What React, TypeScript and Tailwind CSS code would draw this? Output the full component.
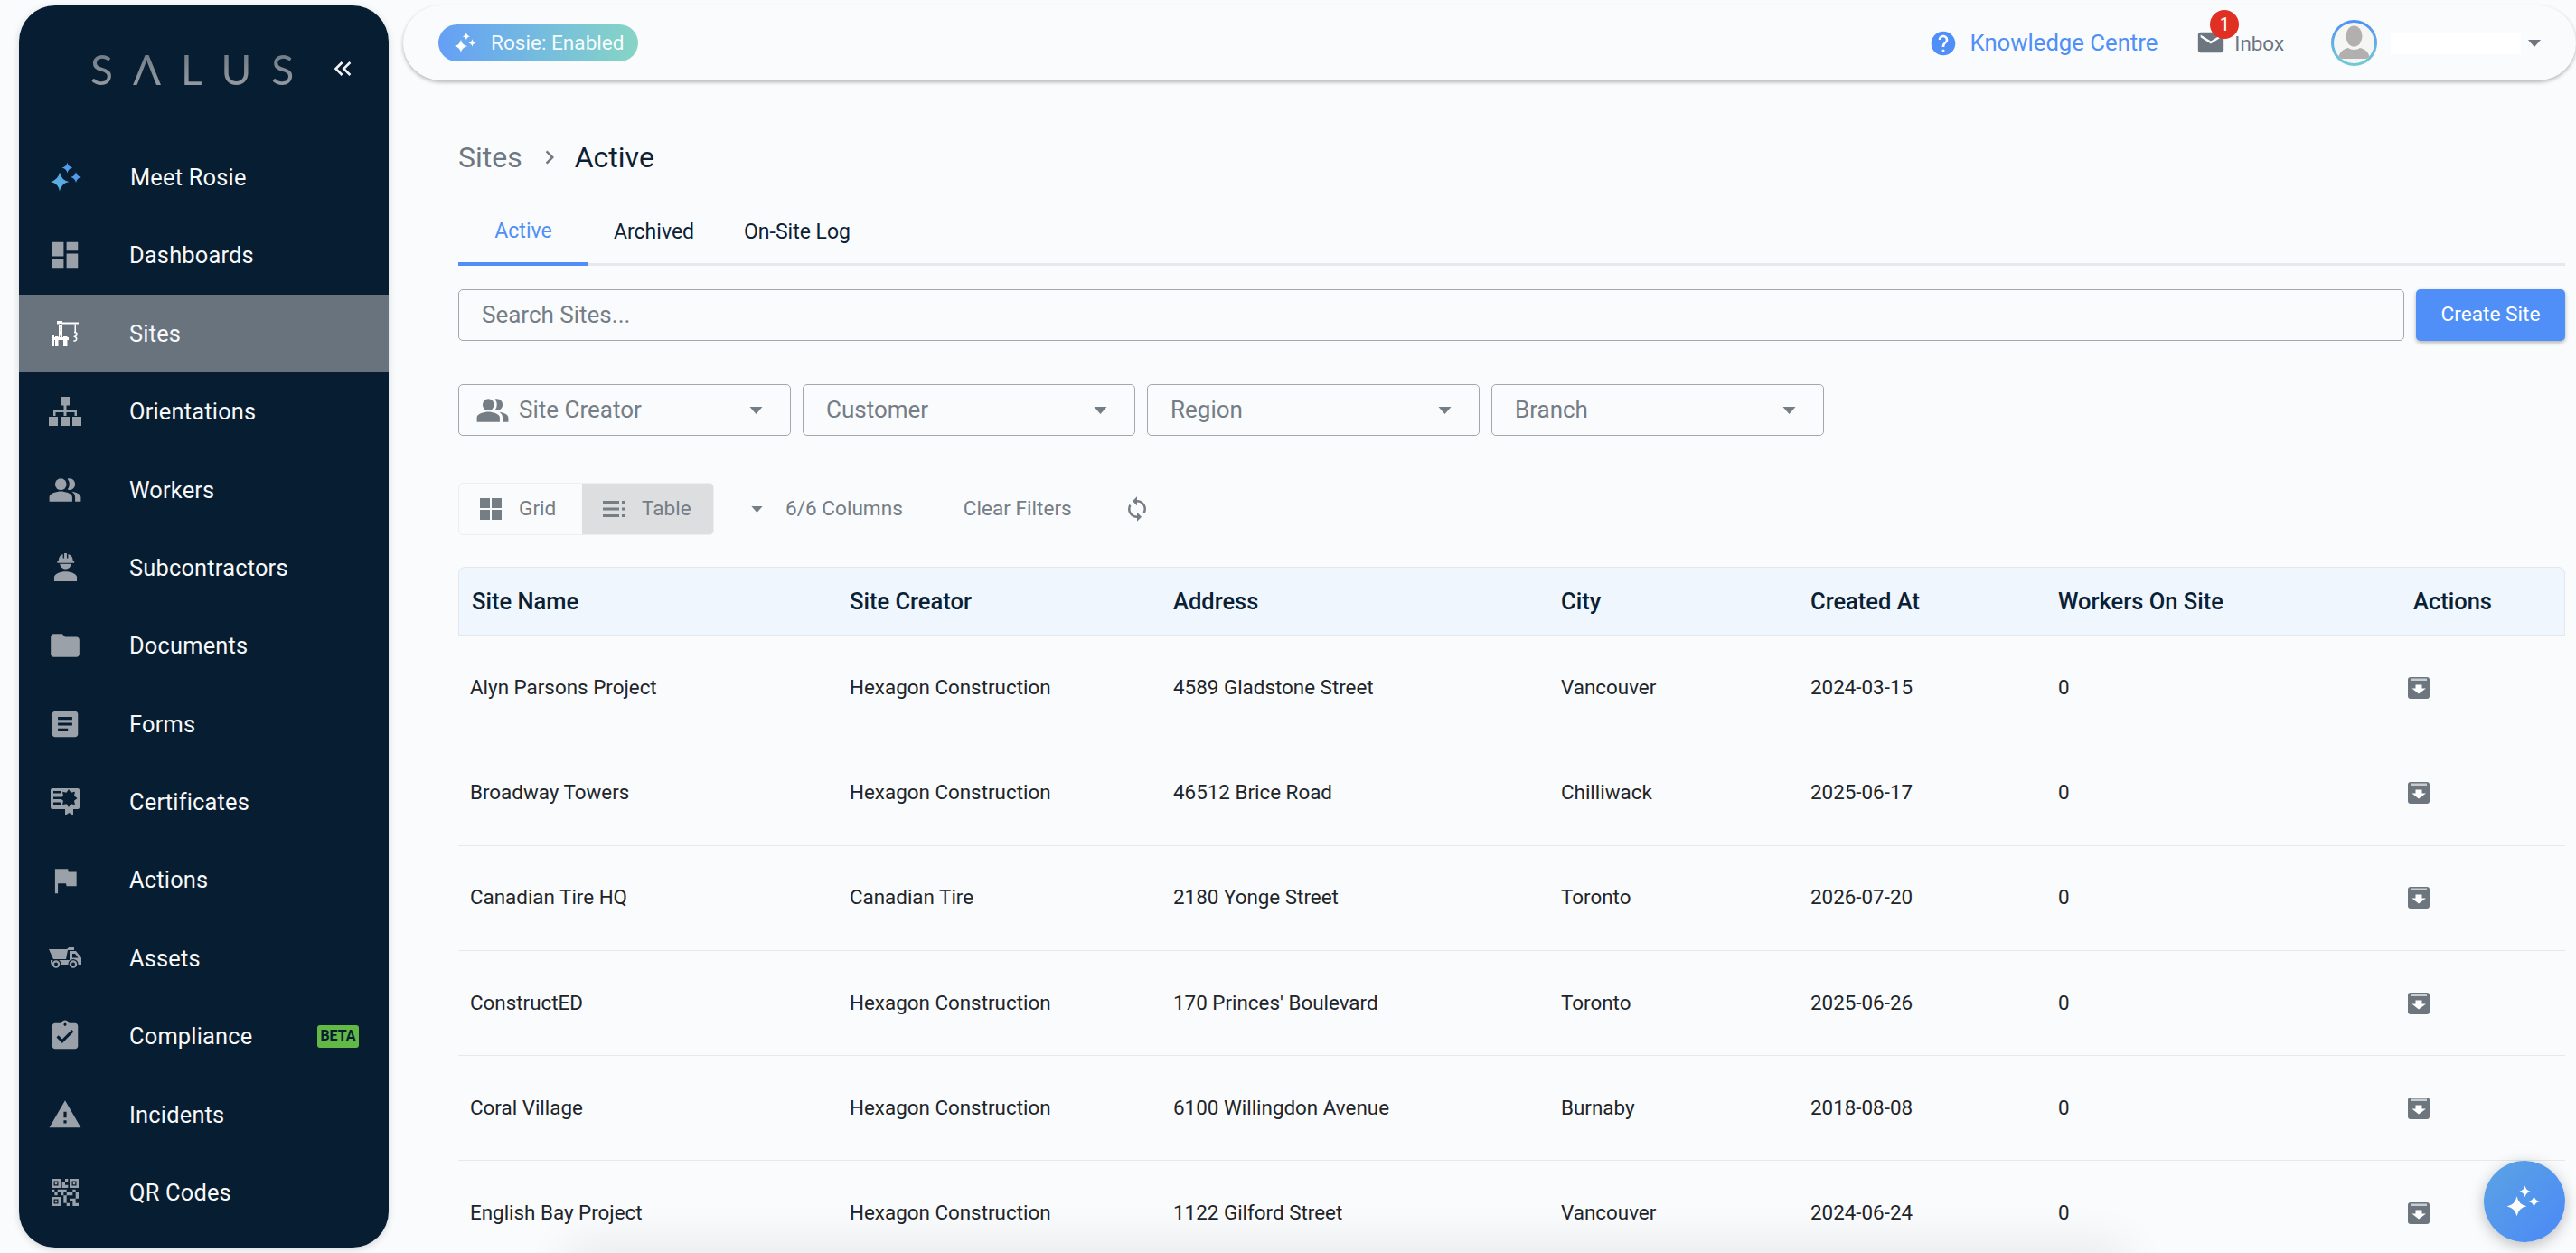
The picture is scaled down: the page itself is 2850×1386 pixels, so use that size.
import React from 'react';
import {
  MdDashboard,
  MdPeopleAlt,
  MdFolder,
  MdArticle,
  MdFlag,
  MdAssignmentTurnedIn,
  MdWarning,
  MdQrCode2,
  MdHelp,
  MdEmail,
  MdSync,
  MdChevronRight,
  MdKeyboardDoubleArrowLeft,
} from 'react-icons/md';

type IconProps = { className?: string };

// four pointed star used by the Rosie icons
const star = (cx: number, cy: number, r: number) => {
  const k = r * 0.16;
  return `M${cx} ${cy - r}Q${cx + k} ${cy - k} ${cx + r} ${cy}Q${cx + k} ${cy + k} ${cx} ${cy + r}Q${cx - k} ${cy + k} ${cx - r} ${cy}Q${cx - k} ${cy - k} ${cx} ${cy - r}Z`;
};
const sparkles = star(10, 23, 10.5) + star(18.5, 7.5, 6) + star(28, 18, 6);

function Sparkles({ className }: IconProps) {
  return (
    <svg viewBox="0 0 36 36" className={className} fill="currentColor">
      <path d={sparkles} />
    </svg>
  );
}

function RosieIcon({ className }: IconProps) {
  return (
    <svg viewBox="0 0 36 36" className={className}>
      <defs>
        <linearGradient id="rosie-grad" x1="1" y1="0" x2="0" y2="1">
          <stop offset="0" stopColor="#4d8af5" />
          <stop offset="1" stopColor="#5fbbdc" />
        </linearGradient>
      </defs>
      <path d={sparkles} fill="url(#rosie-grad)" />
    </svg>
  );
}

function CraneIcon({ className }: IconProps) {
  return (
    <svg viewBox="0 0 30 30" className={className} fill="currentColor">
      <path d="M6 1h6v1.500h18V4.500H12V19H8V4.500H6z" />
      <path fillRule="evenodd" d="M8 4h4v15H8zM9.200 6v2.500h1.600V6zM9.200 10.500V13h1.600v-2.500zM9.200 15v2.500h1.600V15z" fill="#68737e" />
      <path d="M8 4.500h1.200V19H8zM10.800 4.500H12V19h-1.200zM9.200 8.500h1.600v2H9.200zM9.200 13h1.600v2H9.200z" />
      <path d="M25.500 4.500h1.500V13h-1.500z" />
      <path d="M25 13.500c2.500 0 3.500 1.200 3 2.700-.3 1-1.500 1.500-2.300 2 1.200.6 2.300 1.300 2 3-.3 1.400-2 2-3.300 1.600" fill="none" stroke="currentColor" strokeWidth="1.600" />
      <path d="M1 17h2v2h1v-1h3.500v1H13v-1h4.500v1H19v3h-1.500v7H13v-7H7.500v7H4v-7H3v7H1z" />
    </svg>
  );
}

function SitemapIcon({ className }: IconProps) {
  return (
    <svg viewBox="0 0 36 32" className={className} fill="currentColor">
      <path d="M13 0h10v9.500h-3.500v5H31v6.500h-2.500v-4h-9V21h-3v-4h-9v4H5v-6.500h11.500v-5H13V0z" />
      <path d="M0 22h10v10H0zM13 22h10v10H13zM26 22h10v10H26z" />
    </svg>
  );
}

function WorkerIcon({ className }: IconProps) {
  return (
    <svg viewBox="0 0 28 32" className={className} fill="currentColor">
      <path d="M12.500 0h3v5.500h1.500V1c3.500 1 5.500 3.600 5.500 7.500h1.500V11H4.500V8.500H6C6 4.600 8 2 11 1v4.500h1.500V0z" />
      <path d="M7.500 12h13c-.4 3.500-3 6-6.500 6s-6.100-2.500-6.500-6z" />
      <path d="M14 21c6 0 13 2.800 13 6.500V32H1v-4.500C1 23.800 8 21 14 21z" />
    </svg>
  );
}

function CertificateIcon({ className }: IconProps) {
  return (
    <svg viewBox="0 0 32 30" className={className}>
      <path fill="currentColor" d="M2 0h28a2 2 0 0 1 2 2v19a2 2 0 0 1-2 2h-5v7l-4.500-3-4.500 3v-7H2a2 2 0 0 1-2-2V2a2 2 0 0 1 2-2z" />
      <path fill="#071d31" d="M3 3h8v2.500H3zM3 9.500h8V12H3zM3 15.500h8V18H3z" />
      <path fill="#071d31" d="M20 1l2.500 3.800 4.500-1-1 4.500 3.500 2.700-3.500 2.700 1 4.500-4.500-1L20 21l-2.500-3.800-4.500 1 1-4.500L10.500 11 14 8.300l-1-4.500 4.500 1z" />
    </svg>
  );
}

function TruckIcon({ className }: IconProps) {
  return (
    <svg viewBox="0 0 36 25" className={className}>
      <path fill="currentColor" d="M0 3h20L23 0h5v4h-7l-2 10H5z" />
      <path fill="currentColor" d="M23 5h7l6 7.500V20H2v-5h21z" />
      <path fill="#071d31" d="M26 8h3l3.500 4.500H26z" />
      <circle cx="8" cy="19.500" r="5.500" fill="#071d31" />
      <circle cx="8" cy="19.500" r="4.200" fill="currentColor" />
      <circle cx="8" cy="19.500" r="2" fill="#071d31" />
      <circle cx="27" cy="19.500" r="5.500" fill="#071d31" />
      <circle cx="27" cy="19.500" r="4.200" fill="currentColor" />
      <circle cx="27" cy="19.500" r="2" fill="#071d31" />
    </svg>
  );
}

function GridIcon({ className }: IconProps) {
  return (
    <svg viewBox="0 0 24 24" className={className} fill="currentColor">
      <path d="M0 0h11v11H0zM13 0h11v11H13zM0 13h11v11H0zM13 13h11v11H13z" />
    </svg>
  );
}

function TableIcon({ className }: IconProps) {
  return (
    <svg viewBox="0 0 25 20" className={className} fill="currentColor">
      <path d="M0 1h18v3H0zM0 8.500h18v3H0zM0 16h18v3H0zM21 1h4v3h-4zM21 8.500h4v3h-4zM21 16h4v3h-4z" />
    </svg>
  );
}

function ArchiveIcon({ className }: IconProps) {
  return (
    <svg viewBox="0 0 24 24" className={className}>
      <rect width="24" height="24" rx="3" fill="#6d767f" />
      <path d="M3 1.500h18v2.500H3z" fill="#c9ccd0" />
      <path d="M8.500 8.500h7v4H20L12 18.500 4.500 12.500h4z" fill="#fff" />
    </svg>
  );
}

function Caret({ className }: IconProps) {
  return (
    <svg viewBox="0 0 14 8" className={className} fill="currentColor">
      <path d="M0 0h14L7 8z" />
    </svg>
  );
}

const navItems = [
  { icon: RosieIcon, label: 'Meet Rosie', size: 'w-9 h-9 translate-x-[2px]', rosie: true },
  { icon: MdDashboard, label: 'Dashboards', size: 'w-[38px] h-[38px]' },
  { icon: CraneIcon, label: 'Sites', size: 'w-[30px] h-[30px]', active: true },
  { icon: SitemapIcon, label: 'Orientations', size: 'w-[36px] h-[32px]' },
  { icon: MdPeopleAlt, label: 'Workers', size: 'w-[38px] h-[38px]' },
  { icon: WorkerIcon, label: 'Subcontractors', size: 'w-[27px] h-[31px]' },
  { icon: MdFolder, label: 'Documents', size: 'w-[38px] h-[38px]' },
  { icon: MdArticle, label: 'Forms', size: 'w-[38px] h-[38px]' },
  { icon: CertificateIcon, label: 'Certificates', size: 'w-[32px] h-[30px]' },
  { icon: MdFlag, label: 'Actions', size: 'w-[38px] h-[38px]' },
  { icon: TruckIcon, label: 'Assets', size: 'w-[36px] h-[25px]' },
  { icon: MdAssignmentTurnedIn, label: 'Compliance', size: 'w-[38px] h-[38px]', beta: true },
  { icon: MdWarning, label: 'Incidents', size: 'w-[38px] h-[38px]' },
  { icon: MdQrCode2, label: 'QR Codes', size: 'w-[40px] h-[40px]' },
];

const sites = [
  ['Alyn Parsons Project', 'Hexagon Construction', '4589 Gladstone Street', 'Vancouver', '2024-03-15'],
  ['Broadway Towers', 'Hexagon Construction', '46512 Brice Road', 'Chilliwack', '2025-06-17'],
  ['Canadian Tire HQ', 'Canadian Tire', '2180 Yonge Street', 'Toronto', '2026-07-20'],
  ['ConstructED', 'Hexagon Construction', "170 Princes' Boulevard", 'Toronto', '2025-06-26'],
  ['Coral Village', 'Hexagon Construction', '6100 Willingdon Avenue', 'Burnaby', '2018-08-08'],
  ['English Bay Project', 'Hexagon Construction', '1122 Gilford Street', 'Vancouver', '2024-06-24'],
];

const columns = ['Site Name', 'Site Creator', 'Address', 'City', 'Created At', 'Workers On Site', 'Actions'];

function Sidebar() {
  return (
    <aside className="w-[409px] h-[1374px] mt-[6px] ml-[21px] shrink-0 bg-[#071d31] rounded-[40px] shadow-[0_2px_8px_rgba(0,0,0,0.15)] overflow-hidden">
      <div className="h-[146.8px] flex items-start">
        <div className="mt-[42px] ml-[79px] w-[248px] text-[46px] leading-[58px] tracking-[22px] font-normal font-['Lato',sans-serif] bg-gradient-to-b from-[#67727e] to-[#a0a4a9] bg-clip-text text-transparent">
          SΛLUS
        </div>
        <MdKeyboardDoubleArrowLeft className="mt-[54px] ml-[15px] w-[32px] h-[32px] text-[#f3f4f6]" />
      </div>
      <nav>
        {navItems.map((item) => (
          <div
            key={item.label}
            className={`h-[86.4px] flex items-center pl-[32px] ${item.active ? 'bg-[#68737e] text-white' : 'text-[#9aa1a9]'}`}
          >
            <div className="w-[38px] flex items-center justify-center shrink-0">
              <item.icon className={`${item.size} shrink-0`} />
            </div>
            <span className={`${item.rosie ? 'ml-[53px]' : 'ml-[52px]'} text-[25.4px] text-[#f7f8f9] tracking-[0.2px]`}>{item.label}</span>
            {item.beta && (
              <span className="ml-auto mr-[33px] w-[46px] h-[25px] flex items-center justify-center rounded-[3px] bg-[#62b946] text-[#071d31] text-[16px] font-bold">
                BETA
              </span>
            )}
          </div>
        ))}
      </nav>
    </aside>
  );
}

function TopBar() {
  return (
    <header className="h-[83px] mt-[6px] ml-[16px] flex items-center rounded-[42px] bg-[#fafbfd] shadow-[0_2px_4px_rgba(0,0,0,0.28)]">
      <div className="ml-[39px] w-[221px] h-[41px] rounded-full flex items-center bg-gradient-to-r from-[#659ff5] to-[#87d5c4] text-white">
        <Sparkles className="ml-[18px] w-[25px] h-[25px]" />
        <span className="ml-[15px] text-[22.6px] text-white/95">Rosie: Enabled</span>
      </div>
      <div className="ml-auto flex items-center">
        <MdHelp className="w-[32px] h-[32px] text-[#4f8ff7]" />
        <span className="ml-[14px] text-[25.7px] text-[#4f8ff7]">Knowledge Centre</span>
        <div className="relative ml-[42px] flex items-center">
          <MdEmail className="w-[34px] h-[34px] text-[#6d767f]" />
          <span className="absolute left-[16px] top-[-19px] w-[32px] h-[32px] rounded-full bg-[#e03024] text-white text-[20px] flex items-center justify-center">
            1
          </span>
          <span className="ml-[9px] mt-[2px] text-[22.4px] text-[#6d767f]">Inbox</span>
        </div>
        <div className="ml-[52px] w-[51px] h-[51px] rounded-full bg-gradient-to-b from-[#4f8ff7] to-[#74cbd2] p-[3px]">
          <svg viewBox="0 0 45 45" className="w-full h-full rounded-full bg-[#f5f5f4]">
            <ellipse cx="22.500" cy="15" rx="9" ry="11.500" fill="#b1b0ae" />
            <path d="M5 40c1-8 6-11 11-12 3 2.500 10 2.500 13 0 5 1 10 4 11 12z" fill="#b1b0ae" />
          </svg>
        </div>
        <div className="ml-[15px] w-[144px] h-[24px] bg-white" />
        <Caret className="ml-[8px] mr-[39px] w-[14px] h-[8px] text-[#6d767f]" />
      </div>
    </header>
  );
}

function FilterSelect({ label, people }: { label: string; people?: boolean }) {
  return (
    <div className="w-[368px] h-[57px] flex items-center rounded-[5px] border border-[#a3a7ab] pr-[30px]">
      {people ? (
        <>
          <MdPeopleAlt className="ml-[18px] w-[38px] h-[38px] text-[#757d85]" />
          <span className="ml-[10px] text-[26px] text-[#757d85]">{label}</span>
        </>
      ) : (
        <span className="ml-[25px] text-[26px] text-[#757d85]">{label}</span>
      )}
      <Caret className="ml-auto w-[15px] h-[8px] text-[#757d85]" />
    </div>
  );
}

function SitesTable() {
  return (
    <table className="mt-[35px] w-full table-fixed border-separate border-spacing-0">
      <colgroup>
        <col className="w-[419px]" />
        <col className="w-[358px]" />
        <col className="w-[429px]" />
        <col className="w-[276px]" />
        <col className="w-[274px]" />
        <col className="w-[393px]" />
        <col className="w-[182px]" />
      </colgroup>
      <thead>
        <tr>
          {columns.map((col, i) => (
            <th
              key={col}
              className={`h-[76px] pl-[14px] text-left text-[25.5px] font-medium text-[#0a2033] bg-[#eff6fe] border-y border-[#e4e8ec] ${i === 0 ? 'border-l rounded-tl-[8px]' : ''} ${i === 6 ? 'border-r rounded-tr-[8px]' : ''}`}
            >
              {col}
            </th>
          ))}
        </tr>
      </thead>
      <tbody>
        {sites.map((row) => (
          <tr key={row[0]}>
            {row.map((cell, i) => (
              <td
                key={i}
                className={`h-[116.3px] text-[22.4px] text-[#212529] border-b border-[#e6e8eb] ${i === 0 ? 'pl-[13px]' : 'pl-[14px]'}`}
              >
                {cell}
              </td>
            ))}
            <td className="h-[116.3px] pl-[14px] text-[22.4px] text-[#212529] border-b border-[#e6e8eb]">0</td>
            <td className="h-[116.3px] pl-[8px] border-b border-[#e6e8eb]">
              <ArchiveIcon className="w-[24px] h-[24px]" />
            </td>
          </tr>
        ))}
      </tbody>
    </table>
  );
}

export default function App() {
  return (
    <div className="relative h-screen overflow-hidden flex bg-[#fafbfd] font-['Roboto',sans-serif]">
      <Sidebar />
      <main className="flex-1 min-w-0">
        <TopBar />
        <div className="pl-[77px] pr-[12px]">
          {/* Breadcrumb */}
          <div className="mt-[65px] h-[40px] flex items-center text-[32px]">
            <span className="text-[#6f7882]">Sites</span>
            <MdChevronRight className="ml-[15px] w-[30px] h-[30px] text-[#6f7882]" />
            <span className="ml-[13px] text-[#0d2134]">Active</span>
          </div>

          {/* Tabs */}
          <div className="mt-[26px] h-[74px] flex border-b-[3px] border-[#e6e8eb] text-[23px]">
            <div className="w-[144px] h-[74px] pt-[2px] flex items-center justify-center border-b-4 border-[#4f8ff7] text-[#4f8ff7]">
              Active
            </div>
            <div className="h-[71px] pt-[3px] px-[28px] flex items-center text-[#0d2134]">Archived</div>
            <div className="h-[71px] pt-[3px] px-[27px] flex items-center text-[#0d2134]">On-Site Log</div>
          </div>

          {/* Search */}
          <div className="mt-[26px] flex gap-[13px]">
            <div className="flex-1 h-[57px] flex items-center pl-[25px] rounded-[5px] border border-[#a3a7ab] text-[26px] text-[#757d85]">
              Search Sites...
            </div>
            <button className="w-[165px] h-[57px] rounded-[5px] bg-[#4f8ff7] text-white text-[22.7px] shadow-[0_2px_4px_rgba(0,0,0,0.3)]">
              Create Site
            </button>
          </div>

          {/* Filters */}
          <div className="mt-[48px] flex gap-[13px]">
            <FilterSelect label="Site Creator" people />
            <FilterSelect label="Customer" />
            <FilterSelect label="Region" />
            <FilterSelect label="Branch" />
          </div>

          {/* View controls */}
          <div className="mt-[52px] h-[58px] flex items-center text-[22.6px] text-[#757d85]">
            <div className="w-[283px] h-[58px] flex rounded-[5px] border border-[#eceef0] overflow-hidden">
              <div className="w-[136px] flex items-center pl-[23px]">
                <GridIcon className="w-[24px] h-[24px]" />
                <span className="ml-[19px]">Grid</span>
              </div>
              <div className="flex-1 flex items-center pl-[23px] bg-[#dddee0]">
                <TableIcon className="w-[25px] h-[20px]" />
                <span className="ml-[18px]">Table</span>
              </div>
            </div>
            <Caret className="ml-[41px] w-[13px] h-[7px]" />
            <span className="ml-[25px]">6/6 Columns</span>
            <span className="ml-[67px]">Clear Filters</span>
            <MdSync className="ml-[57px] w-[30px] h-[30px]" />
          </div>

          <SitesTable />
        </div>
      </main>

      {/* Rosie chat button */}
      <button className="absolute right-[12px] top-[1284px] w-[90px] h-[90px] rounded-full flex items-center justify-center bg-gradient-to-br from-[#5ca3e3] to-[#4b88f7] text-white shadow-[0_4px_16px_rgba(0,0,0,0.25)]">
        <Sparkles className="w-[38px] h-[38px]" />
      </button>

      {/* shadow of the footer bar just below the fold */}
      <div className="absolute left-[640px] top-[1392px] w-[1700px] h-[10px] rounded-full shadow-[0_0_50px_14px_rgba(0,0,0,0.09)]" />
    </div>
  );
}
